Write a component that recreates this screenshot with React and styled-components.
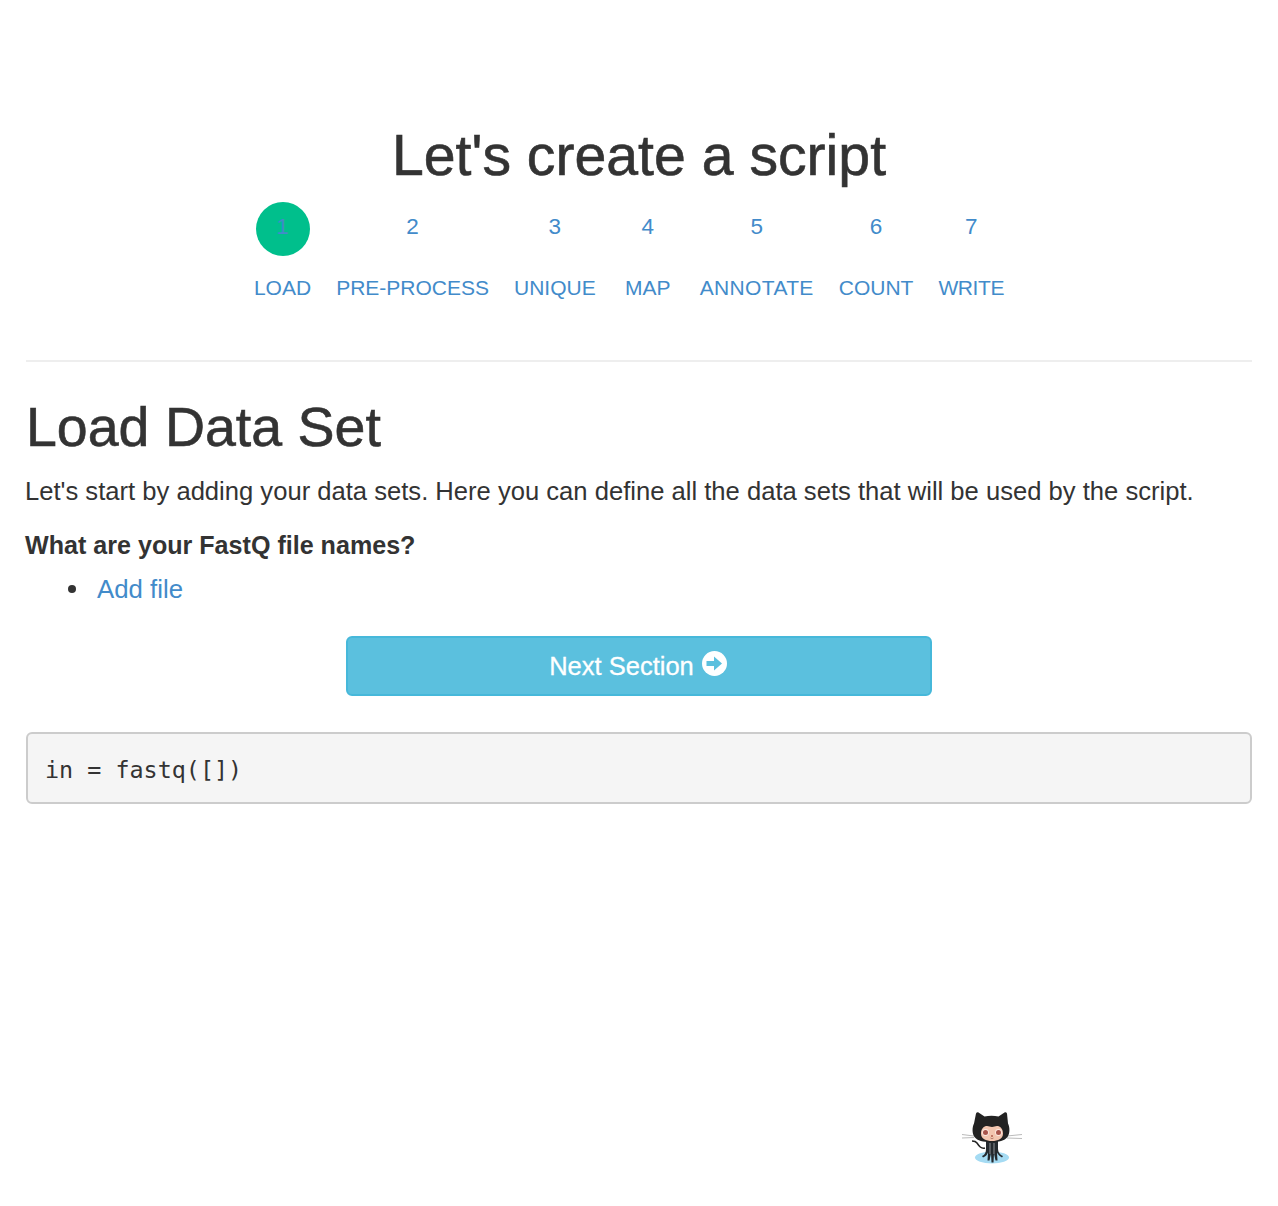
import React from 'react'
import styled, { createGlobalStyle } from 'styled-components'

const steps = [
  { num: 1, label: 'LOAD', active: true },
  { num: 2, label: 'PRE-PROCESS' },
  { num: 3, label: 'UNIQUE' },
  { num: 4, label: 'MAP' },
  { num: 5, label: 'ANNOTATE', spacing: 0.35 },
  { num: 6, label: 'COUNT' },
  { num: 7, label: 'WRITE', spacing: -0.4 },
]

const GlobalStyle = createGlobalStyle`
    html, body {
        margin: 0;
        padding: 0;
        background-color: #fff;
    }
    body {
        font-family: "Liberation Sans", Arial, sans-serif;
        color: #333;
    }
`

const Page = styled.div`
    width: 1278px;
    height: 1206px;
    box-sizing: border-box;
    padding: 120px 26px 0 26px;
`

const Title = styled.h1`
    margin: 0;
    font-size: 57.2px;
    line-height: 70px;
    font-weight: 400;
    text-align: center;
    color: #333;
    -webkit-text-stroke: 0.6px #333;
`

const Steps = styled.nav`
    display: flex;
    justify-content: center;
    gap: 25px;
    margin-top: 12px;
    padding: 0 20px 58px 0;
    border-bottom: 2px solid #eee;
`

const Step = styled.a`
    display: flex;
    flex-direction: column;
    align-items: center;
    color: #428bca;
    font-size: 21px;
`

const StepNum = styled.span`
    width: 54px;
    height: 54px;
    box-sizing: border-box;
    padding-bottom: 4px;
    border-radius: 50%;
    display: flex;
    align-items: center;
    justify-content: center;
    font-size: 22.5px;
    background-color: ${(p) => (p.$active ? '#00bf8c' : 'transparent')};
`

const StepLabel = styled.span`
    margin-top: 18px;
    line-height: 28px;
    letter-spacing: ${(p) => p.$spacing || 0}px;
`

const Heading = styled.h2`
    margin: 30px 0 0 0;
    font-size: 55.5px;
    line-height: 70px;
    font-weight: 400;
    -webkit-text-stroke: 0.6px #333;
`

const Lead = styled.p`
    margin: 11px 0 0 -1px;
    font-size: 25.6px;
    line-height: 36px;
`

const Question = styled.p`
    margin: 18px 0 0 -1px;
    font-size: 25.1px;
    line-height: 36px;
    font-weight: 700;
`

const FileList = styled.ul`
    list-style: none;
    margin: 8px 0 0 0;
    padding: 0 0 0 42px;
    font-size: 25.8px;
    line-height: 36px;
`

const FileItem = styled.li`
    display: flex;
    align-items: center;
    gap: 21px;

    &::before {
        content: '';
        width: 8px;
        height: 8px;
        border-radius: 50%;
        background-color: #333;
    }
`

const FileLink = styled.a`
    color: #428bca;
`

const ButtonRow = styled.div`
    display: flex;
    justify-content: center;
    margin-top: 29px;
`

const NextButton = styled.button`
    width: 586px;
    height: 60px;
    display: flex;
    align-items: center;
    justify-content: center;
    gap: 8px;
    background-color: #5bc0de;
    border: 2px solid #46b8da;
    border-radius: 6px;
    color: #fff;
    font-family: inherit;
    font-size: 25.5px;
    padding: 0 2px 0 0;
    -webkit-text-stroke: 0.3px #fff;
`

const ArrowIcon = styled.svg`
    margin-top: -5px;
`

const Code = styled.pre`
    margin: 36px 0 0 0;
    height: 72px;
    box-sizing: border-box;
    padding: 3px 17px 0 17px;
    display: flex;
    align-items: center;
    background-color: #f5f5f5;
    border: 2px solid #ccc;
    border-radius: 6px;
    font-family: "DejaVu Sans Mono", monospace;
    font-size: 23.4px;
    color: #333;
`

const Footer = styled.div`
    display: flex;
    margin-top: 306px;
    padding-left: 934px;
`

const ArrowCircle = () => (
  <ArrowIcon width="25" height="25" viewBox="0 0 25 25">
    <circle cx="12.500" cy="12.500" r="12.500" fill="#fff" />
    <path d="M4.500 10h7.500V5.500l8 7-8 7V15H4.500z" fill="#5bc0de" />
  </ArrowIcon>
)

const Octocat = () => (
  <svg width="64" height="56" viewBox="0 0 64 56">
    <ellipse cx="32" cy="47.500" rx="17" ry="6" fill="#a5dbf3" />
    <path d="M2 24.500l12 1.500M2 28l12-.5M47 26l15-1.500M47 28l15 .5" stroke="#bbb" strokeWidth="1" fill="none" />
    <path d="M25 38c-4 1-6-2-8-5-1-1.500-3-2-5-2" stroke="#222" strokeWidth="1.500" fill="none" />
    <path d="M26 30h12v9c0 3 2 6 5 7l-1 1.500c-2-1-4-3-5-5l.5 8h-2l-1.500-7-.5 9h-2l-.5-9-1.500 7h-2l.5-8c-1 2-2 4-5 5l-1-1.500c3-1 4-4 4-7z" fill="#24292e" />
    <path d="M30 33v11M34 33v11" stroke="#8d9296" strokeWidth="1" fill="none" />
    <path d="M16 3.500c.5-1 1.500-1.500 2.500-1l6 4c4.500-1 9.500-1 14 0l6-4c1-.5 2-.2 2.500 1l1 10c2 4 2 10-.5 13.500-3 4-8.500 5-16.500 5s-13.500-1-16.500-5c-2.500-3.500-2.500-9.500-.5-13.500z" fill="#222" />
    <path d="M21 23.500c0-5 3-7.500 6-7.500 2 0 3 1 5 1s3-1 5-1c3 0 6 2.500 6 7.500 0 5.500-5 7.500-11 7.500s-11-2-11-7.500z" fill="#f3c6b0" />
    <circle cx="25.500" cy="22.500" r="3.400" fill="#fbe8e0" />
    <circle cx="38.500" cy="22.500" r="3.400" fill="#fbe8e0" />
    <circle cx="25.500" cy="22.500" r="2.500" fill="#a9554b" />
    <circle cx="38.500" cy="22.500" r="2.500" fill="#a9554b" />
    <circle cx="32" cy="26" r="1" fill="#b0604f" />
    <path d="M30.500 28c1 .8 2 .8 3 0" stroke="#8a4a3a" strokeWidth=".6" fill="none" />
  </svg>
)

const App = () => {
  return (
    <Page>
      <GlobalStyle />
      <Title>Let's create a script</Title>
      <Steps>
        {steps.map((step) => (
          <Step key={step.num}>
            <StepNum $active={step.active}>{step.num}</StepNum>
            <StepLabel $spacing={step.spacing}>{step.label}</StepLabel>
          </Step>
        ))}
      </Steps>
      <Heading>Load Data Set</Heading>
      <Lead>Let's start by adding your data sets. Here you can define all the data sets that will be used by the script.</Lead>
      <Question>What are your FastQ file names?</Question>
      <FileList>
        <FileItem><FileLink>Add file</FileLink></FileItem>
      </FileList>
      <ButtonRow>
        <NextButton>Next Section <ArrowCircle /></NextButton>
      </ButtonRow>
      <Code>in = fastq([])</Code>
      <Footer>
        <Octocat />
      </Footer>
    </Page>
  )
}

export default App
